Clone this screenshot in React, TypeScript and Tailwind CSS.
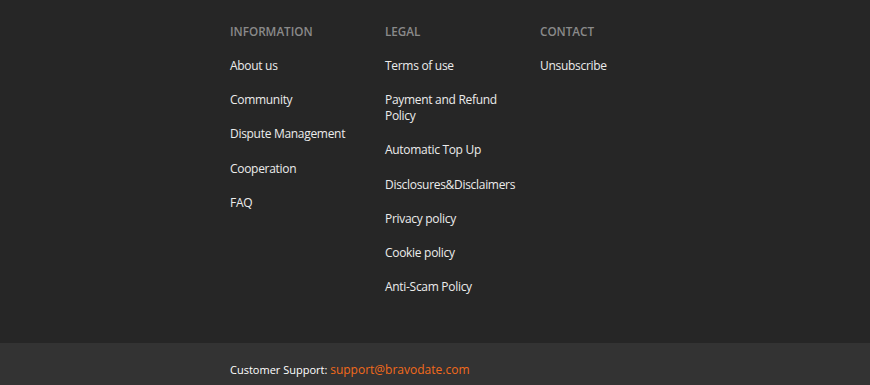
import React from "react";

const columns = [
  {
    title: "Information",
    links: [["About us"], ["Community"], ["Dispute Management"], ["Cooperation"], ["FAQ"]],
  },
  {
    title: "Legal",
    links: [
      ["Terms of use"],
      ["Payment and Refund", "Policy"],
      ["Automatic Top Up"],
      ["Disclosures&Disclaimers"],
      ["Privacy policy"],
      ["Cookie policy"],
      ["Anti-Scam Policy"],
    ],
  },
  {
    title: "Contact",
    links: [["Unsubscribe"]],
  },
];

export default function App() {
  return (
    <footer className="min-h-[385px] bg-[#262626] font-['Open_Sans',sans-serif]">
      <div className="flex pl-[230px] pt-[23px] pb-[48px]">
        {columns.map((col) => (
          <div key={col.title} className="w-[155px]">
            <h4 className="text-[11.7px] leading-4 font-semibold uppercase text-[#8a8a8a]">
              {col.title}
            </h4>
            <ul className="mt-[19px] flex flex-col gap-[18.2px]">
              {col.links.map((l) => (
                <li key={l[0]} className="text-[12px] leading-4 tracking-[-0.3px] text-[#ececec]">
                  <a href="#">
                    {l.map((line, i) => (
                      <span key={i} className="block">
                        {line}
                      </span>
                    ))}
                  </a>
                </li>
              ))}
            </ul>
          </div>
        ))}
      </div>
      <div className="bg-[#333333] h-[43px] pl-[230px] pt-[19px]">
        <p className="text-[11px] leading-4 font-medium text-white">
          Customer Support:{" "}
          <a href="#" className="text-[12px] font-normal text-[#f26a1b]">
            support@bravodate.com
          </a>
        </p>
      </div>
    </footer>
  );
}
